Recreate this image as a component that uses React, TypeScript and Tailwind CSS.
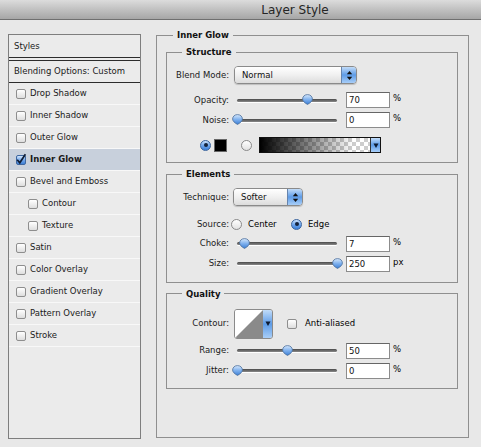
import type { ReactNode } from 'react'

type Effect = { name: string; checked?: boolean; selected?: boolean; indent?: boolean }

const effects: Effect[] = [
  { name: 'Drop Shadow' },
  { name: 'Inner Shadow' },
  { name: 'Outer Glow' },
  { name: 'Inner Glow', checked: true, selected: true },
  { name: 'Bevel and Emboss' },
  { name: 'Contour', indent: true },
  { name: 'Texture', indent: true },
  { name: 'Satin' },
  { name: 'Color Overlay' },
  { name: 'Gradient Overlay' },
  { name: 'Pattern Overlay' },
  { name: 'Stroke' },
]

function Checkbox({ checked = false }: { checked?: boolean }) {
  if (checked) {
    return (
      <span className="flex h-[10px] w-[10px] shrink-0 items-center justify-center rounded-[2px] border border-[#3d66a0] bg-linear-to-b from-[#d3e5fb] via-[#74a8ea] to-[#3d7fd6]">
        <svg width="10" height="10" viewBox="0 0 10 10" className="overflow-visible">
          <path d="M1.2 4.8 L3.8 7.8 L9.4 -0.8" fill="none" stroke="#0e1c34" strokeWidth="1.7" />
        </svg>
      </span>
    )
  }
  return (
    <span className="block h-[10px] w-[10px] shrink-0 rounded-[2px] border border-[#8e8e8e] bg-linear-to-b from-white to-[#dedede]" />
  )
}

function Radio({ on = false }: { on?: boolean }) {
  if (on) {
    return (
      <span className="flex h-[11px] w-[11px] shrink-0 items-center justify-center rounded-full border border-[#38639e] bg-linear-to-b from-[#cde2fb] via-[#6fa6ec] to-[#3c80d8]">
        <span className="h-[4px] w-[4px] rounded-full bg-[#14223a]" />
      </span>
    )
  }
  return (
    <span className="block h-[11px] w-[11px] shrink-0 rounded-full border border-[#8a8a8a] bg-linear-to-b from-white to-[#e2e2e2]" />
  )
}

function Knob() {
  return (
    <svg width="11" height="11" viewBox="0 0 11 11">
      <defs>
        <linearGradient id="knob" x1="0" y1="0" x2="0" y2="1">
          <stop offset="0" stopColor="#d8e9fc" />
          <stop offset="0.5" stopColor="#7fb1ee" />
          <stop offset="1" stopColor="#3b7ed5" />
        </linearGradient>
      </defs>
      <path
        d="M5.5 0.6C8.3 0.6 10.4 2.5 10.4 5c0 2-2 3.9-4.9 5.4C2.6 8.9 0.6 7 0.6 5 0.6 2.5 2.7 0.6 5.5 0.6Z"
        fill="url(#knob)"
        stroke="#4d6e99"
        strokeWidth="0.8"
      />
    </svg>
  )
}

function Slider({ pos }: { pos: number }) {
  // track is 100px wide, pos is the knob offset on it
  return (
    <div className="relative ml-[3px] flex h-[12px] w-[110px] items-center px-[5px]">
      <div className="h-[3px] w-full rounded-full bg-linear-to-b from-[#4a4a4a] to-[#8a8a8a] shadow-[0_1px_0_#ffffff]" />
      <div className="absolute top-[0px]" style={{ left: `${pos}px` }}>
        <Knob />
      </div>
    </div>
  )
}

function Field({ value }: { value: string }) {
  return (
    <div className="ml-[4px] h-[16px] w-[44px] border border-[#8c8c8c] border-t-[#666] bg-white pl-[2px] leading-[14px] text-[#111]">
      {value}
    </div>
  )
}

function Stepper() {
  return (
    <svg width="7" height="11" viewBox="0 0 7 11">
      <path d="M3.5 1 L6.2 4.3 H0.8 Z" fill="#111" />
      <path d="M3.5 10 L6.2 6.7 H0.8 Z" fill="#111" />
    </svg>
  )
}

function DownArrow() {
  return (
    <svg width="6" height="7" viewBox="0 0 6 7">
      <path d="M0.5 1.5 H5.5 L3 6 Z" fill="#0d1a30" />
    </svg>
  )
}

function Popup({ label, width }: { label: string; width: string }) {
  return (
    <div
      className={`flex h-[18px] ${width} overflow-hidden rounded-[4px] border border-[#8a8a8a] shadow-[0_1px_1px_rgba(0,0,0,0.18)]`}
    >
      <div className="flex-1 bg-linear-to-b from-white via-[#f0f0f0] to-[#dcdcdc] pl-[7px] leading-[16px] text-[#111]">
        {label}
      </div>
      <div className="flex w-[15px] items-center justify-center border-l border-[#6684ad] bg-linear-to-b from-[#c2dcf8] via-[#5d9be6] to-[#a8cef8]">
        <Stepper />
      </div>
    </div>
  )
}

function Row({ label, children, className = '' }: { label: string; children: ReactNode; className?: string }) {
  return (
    <div className={`flex items-center ${className}`}>
      <span className="w-[62px] shrink-0 text-right text-[#1a1a1a]">{label}</span>
      {children}
    </div>
  )
}

function Group({ title, children, className = '' }: { title: string; children: ReactNode; className?: string }) {
  return (
    <fieldset className={`border border-[#8f8f8f] ${className}`}>
      <legend className="ml-[15px] px-[4px] font-bold leading-[12px] text-[#111]">{title}</legend>
      {children}
    </fieldset>
  )
}

function Gradient() {
  return (
    <div className="ml-[7px] flex h-[16px] w-[122px] border border-[#111]">
      <svg width="110" height="14" viewBox="0 0 110 14">
        <defs>
          <pattern id="checker" width="8" height="8" patternUnits="userSpaceOnUse">
            <rect width="8" height="8" fill="#ffffff" />
            <rect width="4" height="4" fill="#cdcdcd" />
            <rect x="4" y="4" width="4" height="4" fill="#cdcdcd" />
          </pattern>
          <linearGradient id="fade" x1="0" y1="0" x2="1" y2="0">
            <stop offset="0" stopColor="#000" stopOpacity="1" />
            <stop offset="0.85" stopColor="#000" stopOpacity="0" />
          </linearGradient>
        </defs>
        <rect width="110" height="14" fill="url(#checker)" />
        <rect width="110" height="14" fill="url(#fade)" />
      </svg>
      <div className="flex flex-1 items-center justify-center border-l border-[#333] bg-linear-to-b from-[#c2dcf8] via-[#5d9be6] to-[#a8cef8]">
        <DownArrow />
      </div>
    </div>
  )
}

function ContourPicker() {
  return (
    <div className="ml-[5px] flex h-[30px] w-[39px] overflow-hidden rounded-[3px] border border-[#8a8a8a]">
      <svg width="28" height="28" viewBox="0 0 28 28">
        <rect width="28" height="28" fill="#fff" />
        <path d="M0 28 L28 0 V28 Z" fill="#8a8a8a" />
      </svg>
      <div className="flex flex-1 items-center justify-center bg-linear-to-b from-[#c2dcf8] via-[#5d9be6] to-[#a8cef8]">
        <DownArrow />
      </div>
    </div>
  )
}

export default function App() {
  return (
    <div className="flex h-[447px] w-[481px] flex-col overflow-hidden bg-[#e8e8e8] font-['DejaVu_Sans',sans-serif] text-[8.5px]">
      {/* title bar */}
      <div className="flex h-[20px] shrink-0 items-center justify-center border-b border-[#6f6f6f] bg-linear-to-b from-[#dcdcdc] to-[#a6a6a6] pl-[109px] text-[12px] text-[#252525]">
        Layer Style
      </div>

      <div className="flex items-start pl-[8px]">
        {/* styles list */}
        <div className="mt-[14px] flex h-[405px] w-[133px] flex-col border border-[#7e7e7e] bg-[#ebebeb] text-[#1a1a1a]">
          <div className="flex h-[23px] items-center border-b border-[#2c2c2c] pl-[5px]">Styles</div>
          <div className="mt-[2px] flex h-[23px] items-center border-y border-[#2c2c2c] pl-[5px]">
            Blending Options: Custom
          </div>
          {effects.map((fx) => (
            <div
              key={fx.name}
              className={`flex h-[22px] items-center gap-[4px] border-b border-[#f8f8f8] ${fx.indent ? 'pl-[19px]' : 'pl-[7px]'} ${fx.selected ? 'bg-[#c8d0dc] font-bold' : ''}`}
            >
              <Checkbox checked={fx.checked} />
              <span>{fx.name}</span>
            </div>
          ))}
        </div>

        {/* effect options */}
        <fieldset className="ml-[15px] mt-[9px] flex h-[409px] w-[313px] flex-col gap-[5px] border border-[#8f8f8f] pl-[9px] pr-[10px] pt-[5px]">
          <legend className="ml-[7px] px-[4px] font-bold leading-[12px] text-[#111]">Inner Glow</legend>

          <Group title="Structure" className="pb-[9px] pt-[8px]">
            <Row label="Blend Mode:">
              <div className="ml-[5px]">
                <Popup label="Normal" width="w-[123px]" />
              </div>
            </Row>
            <Row label="Opacity:" className="mt-[8px]">
              <Slider pos={70} />
              <Field value="70" />
              <span className="ml-[3px] self-start">%</span>
            </Row>
            <Row label="Noise:" className="mt-[4px]">
              <Slider pos={0} />
              <Field value="0" />
              <span className="ml-[3px] self-start">%</span>
            </Row>
            <div className="mt-[9px] flex items-center pl-[33px]">
              <Radio on />
              <span className="ml-[3px] h-[13px] w-[13px] border border-[#666] bg-black" />
              <span className="ml-[14px] block">
                <Radio />
              </span>
              <Gradient />
            </div>
          </Group>

          <Group title="Elements" className="pb-[10px] pt-[8px]">
            <Row label="Technique:">
              <div className="ml-[4px]">
                <Popup label="Softer" width="w-[70px]" />
              </div>
            </Row>
            <Row label="Source:" className="mt-[12px]">
              <div className="ml-[2px] flex w-[60px] items-center">
                <Radio />
                <span className="ml-[6px]">Center</span>
              </div>
              <div className="flex items-center">
                <Radio on />
                <span className="ml-[6px]">Edge</span>
              </div>
            </Row>
            <Row label="Choke:" className="mt-[5px]">
              <Slider pos={7} />
              <Field value="7" />
              <span className="ml-[3px] self-start">%</span>
            </Row>
            <Row label="Size:" className="mt-[4px]">
              <Slider pos={100} />
              <Field value="250" />
              <span className="ml-[3px] self-start">px</span>
            </Row>
          </Group>

          <Group title="Quality" className="pb-[9px] pt-[9px]">
            <Row label="Contour:">
              <ContourPicker />
              <span className="ml-[14px] block">
                <Checkbox />
              </span>
              <span className="ml-[8px]">Anti-aliased</span>
            </Row>
            <Row label="Range:" className="mt-[4px]">
              <Slider pos={50} />
              <Field value="50" />
              <span className="ml-[3px] self-start">%</span>
            </Row>
            <Row label="Jitter:" className="mt-[4px]">
              <Slider pos={0} />
              <Field value="0" />
              <span className="ml-[3px] self-start">%</span>
            </Row>
          </Group>
        </fieldset>
      </div>
    </div>
  )
}
